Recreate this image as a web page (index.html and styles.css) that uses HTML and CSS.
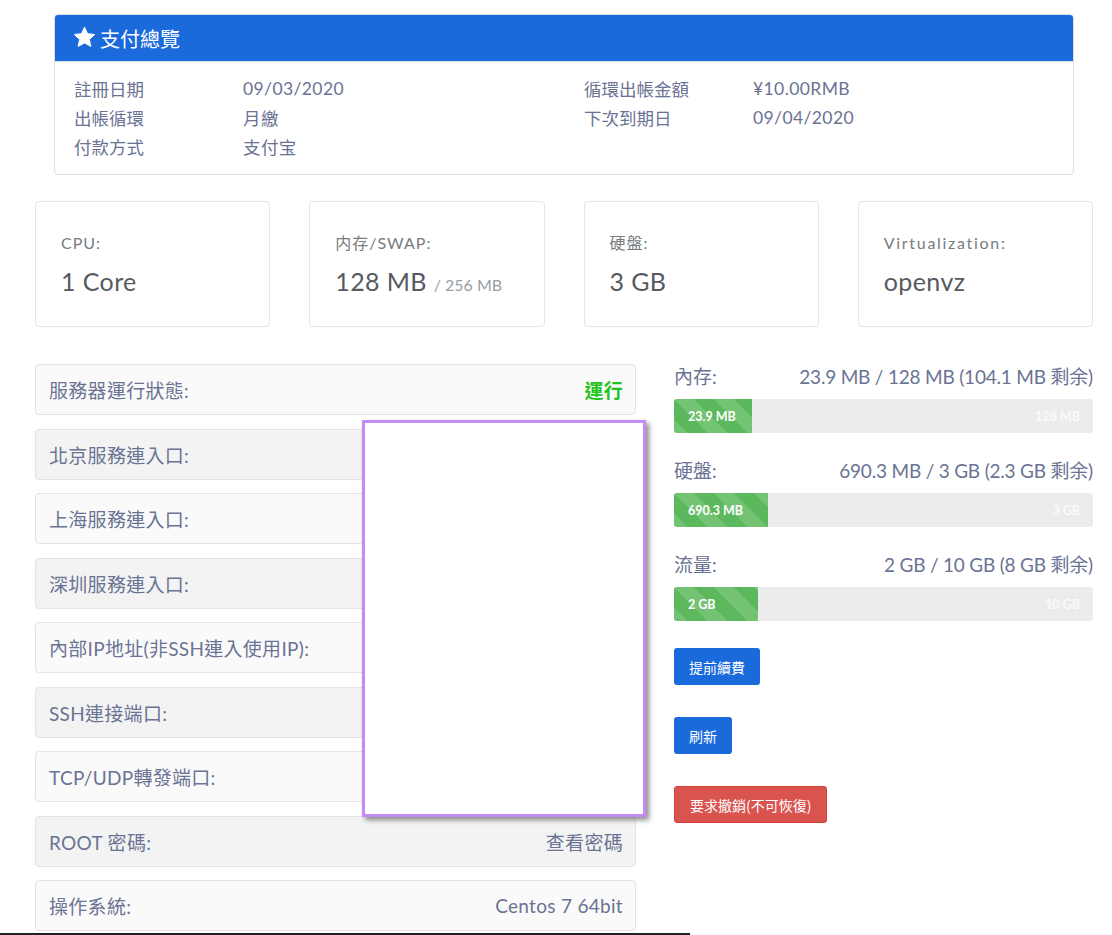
FILE: index.html
```html
<!DOCTYPE html>
<html lang="zh-Hant">
<head>
<meta charset="utf-8">
<title>支付總覽</title>
<link rel="stylesheet" href="styles.css">
</head>
<body>
<div class="page">
  <section class="panel">
    <div class="panel-head">
      <svg class="star" viewBox="0 0 24 24" width="23" height="23"><path d="M12 1.2l3.2 6.8 7.4.9-5.5 5.1 1.5 7.3L12 17.7l-6.6 3.6 1.5-7.3-5.5-5.1 7.4-.9z" fill="#fff" stroke="#fff" stroke-width="1" stroke-linejoin="round"/></svg>
      <span>支付總覽</span>
    </div>
    <div class="panel-body">
      <div class="info-col">
        <div class="info-row"><span class="k">註冊日期</span><span class="v">09/03/2020</span></div>
        <div class="info-row"><span class="k">出帳循環</span><span class="v">月繳</span></div>
        <div class="info-row"><span class="k">付款方式</span><span class="v">支付宝</span></div>
      </div>
      <div class="info-col">
        <div class="info-row"><span class="k">循環出帳金額</span><span class="v">¥10.00RMB</span></div>
        <div class="info-row"><span class="k">下次到期日</span><span class="v">09/04/2020</span></div>
      </div>
    </div>
  </section>

  <section class="stats">
    <div class="stat"><div class="stat-label">CPU:</div><div class="stat-value">1 Core</div></div>
    <div class="stat"><div class="stat-label">内存/SWAP:</div><div class="stat-value">128 MB <small>/ 256 MB</small></div></div>
    <div class="stat"><div class="stat-label">硬盤:</div><div class="stat-value">3 GB</div></div>
    <div class="stat"><div class="stat-label wide">Virtualization:</div><div class="stat-value">openvz</div></div>
  </section>

  <section class="lower">
    <div class="list">
      <div class="row odd"><span>服務器運行狀態:</span><span class="running">運行</span></div>
      <div class="row even"><span>北京服務連入口:</span></div>
      <div class="row odd"><span>上海服務連入口:</span></div>
      <div class="row even"><span>深圳服務連入口:</span></div>
      <div class="row odd"><span>內部IP地址(非SSH連入使用IP):</span></div>
      <div class="row even"><span>SSH連接端口:</span></div>
      <div class="row odd"><span>TCP/UDP轉發端口:</span></div>
      <div class="row even"><span>ROOT 密碼:</span><span class="val">查看密碼</span></div>
      <div class="row odd"><span>操作系統:</span><span class="val">Centos 7 64bit</span></div>
      <div class="mask"></div>
    </div>

    <div class="usage">
      <div class="meter">
        <div class="meter-head"><span>內存:</span><span class="amount">23.9 MB / 128 MB <em>(104.1 MB 剩余)</em></span></div>
        <div class="bar"><div class="fill" style="width:18.7%"></div><span class="in-l">23.9 MB</span><span class="in-r">128 MB</span></div>
      </div>
      <div class="meter">
        <div class="meter-head"><span>硬盤:</span><span class="amount">690.3 MB / 3 GB <em>(2.3 GB 剩余)</em></span></div>
        <div class="bar"><div class="fill" style="width:22.5%"></div><span class="in-l">690.3 MB</span><span class="in-r">3 GB</span></div>
      </div>
      <div class="meter">
        <div class="meter-head"><span>流量:</span><span class="amount">2 GB / 10 GB <em>(8 GB 剩余)</em></span></div>
        <div class="bar"><div class="fill" style="width:20%"></div><span class="in-l">2 GB</span><span class="in-r">10 GB</span></div>
      </div>
      <div class="actions">
        <button class="btn blue">提前續費</button>
        <button class="btn blue">刷新</button>
        <button class="btn red">要求撤銷(不可恢復)</button>
      </div>
    </div>
  </section>
  <div class="cutline"></div>
</div>
</body>
</html>
```
FILE: styles.css
```css
* { box-sizing: border-box; }
html, body { margin: 0; padding: 0; background: #fff; }
body {
  font-family: Lato, "Noto Sans CJK TC", sans-serif;
  color: #6a7393;
  overflow: hidden;
}
.page {
  padding: 14px 19px 0 35px;
  width: 1112px;
}
.panel {
  margin: 0 19px;
  border: 1px solid #dcdfe5;
  border-radius: 4px;
  overflow: hidden;
}
.panel-head {
  height: 47px;
  background: #1a6adb;
  color: #fff;
  display: flex;
  align-items: center;
  padding-left: 18px;
  font-size: 20px;
  font-family: "Noto Sans CJK TC", sans-serif;
  gap: 4px;
  border-bottom: 1px solid #d6dbe3;
}
.panel-head .star { margin-top: -1px; }
.panel-body {
  display: grid;
  grid-template-columns: 510px 1fr;
  padding: 12px 19px 13px;
}
.info-row {
  display: flex;
  height: 29px;
  align-items: center;
  font-size: 17.5px;
}
.info-row .k { width: 169px; font-family: "Noto Sans CJK TC", sans-serif; }
.info-row .v { letter-spacing: 0.4px; }

.stats {
  margin-top: 26px;
  display: grid;
  grid-template-columns: repeat(4, 1fr);
  gap: 39px;
}
.stat {
  height: 126px;
  border: 1px solid #e2e5ec;
  border-radius: 4px;
  padding: 29px 25px 0;
}
.stat-label {
  font-size: 16px;
  color: #777b80;
  height: 24px;
  line-height: 24px;
  letter-spacing: 1px;
}
.stat-label.wide { letter-spacing: 1.7px; }
.stat-value {
  margin-top: 11px;
  font-size: 25px;
  color: #555a60;
  line-height: 30px;
  letter-spacing: 0.4px;
}
.stat-value small { font-size: 16px; color: #9a9ea3; letter-spacing: 0; }

.lower {
  margin-top: 37px;
  display: grid;
  grid-template-columns: 601px 1fr;
  gap: 38px;
}
.list {
  position: relative;
  display: flex;
  flex-direction: column;
  gap: 13.5px;
}
.row {
  height: 51px;
  border: 1px solid #e3e3e3;
  border-radius: 4px;
  display: flex;
  align-items: center;
  justify-content: space-between;
  padding: 0 12px 0 13px;
  font-size: 19px;
  letter-spacing: 0.3px;
}
.row.odd { background: #fafafa; }
.row.even { background: #f3f3f3; }
.row .running { color: #1fc41f; font-weight: 700; font-family: "Noto Sans CJK TC", sans-serif; }
.row .val { color: #6a7393; }
.mask {
  position: absolute;
  left: 327px;
  top: 56px;
  width: 284px;
  height: 397px;
  background: #fff;
  border: 3px solid #c48bf7;
  box-shadow: 3px 3px 5px rgba(0,0,0,0.45);
}

.usage { display: flex; flex-direction: column; }
.meter { margin-bottom: 25px; }
.meter-head {
  display: flex;
  justify-content: space-between;
  align-items: center;
  height: 22px;
  font-size: 19px;
  margin-bottom: 13px;
}
.meter-head .amount { font-size: 19px; letter-spacing: -0.2px; }
.meter-head em { font-style: normal; }
.bar {
  position: relative;
  height: 34px;
  background: #ececec;
  border-radius: 3px;
  overflow: hidden;
  display: flex;
  align-items: center;
  justify-content: space-between;
  padding: 0 13px 0 14px;
  font-size: 12.5px;
  font-weight: 700;
}
.fill {
  position: absolute;
  left: 0; top: 0; bottom: 0;
  background-color: #5cb85c;
  background-image: linear-gradient(45deg, rgba(255,255,255,.15) 25%, transparent 25%, transparent 50%, rgba(255,255,255,.15) 50%, rgba(255,255,255,.15) 75%, transparent 75%, transparent);
  background-size: 40px 40px;
}
.in-l { position: relative; color: #fff; }
.in-r { position: relative; color: rgba(255,255,255,0.85); font-weight: 600; }

.actions {
  margin-top: 2px;
  display: flex;
  flex-direction: column;
  align-items: flex-start;
  gap: 32px;
}
.btn {
  height: 37px;
  border: none;
  border-radius: 3px;
  color: #fff;
  font-size: 14px;
  font-family: "Noto Sans CJK TC", sans-serif;
  padding: 0 15px;
  cursor: pointer;
}
.btn.blue { background: #1a6adb; }
.btn.red { background: #d9534f; border: 1px solid #d43f3a; }
.cutline {
  margin: 2px 0 0 -35px;
  width: 690px;
  height: 2px;
  background: #222;
}
```
